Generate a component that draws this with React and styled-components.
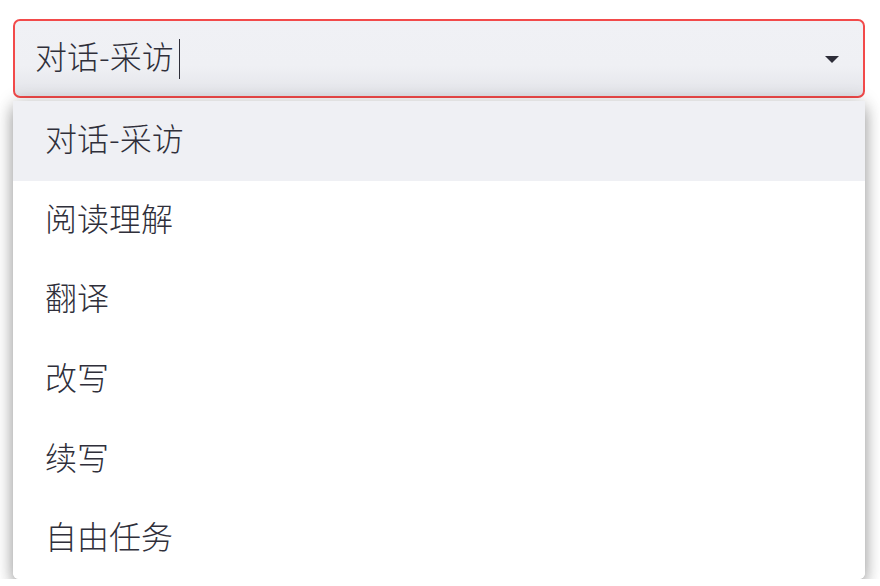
import styled, { createGlobalStyle } from 'styled-components';

const options = ['对话-采访', '阅读理解', '翻译', '改写', '续写', '自由任务'];

const GlobalStyle = createGlobalStyle`
  html, body {
    margin: 0;
    padding: 0;
    background: #ffffff;
    font-family: "Noto Sans CJK SC", "Noto Sans", sans-serif;
  }
`;

const Page = styled.div`
  padding: 19px 15px 0 13px;
`;

const Field = styled.div`
  height: 79px;
  box-sizing: border-box;
  border: 2px solid #f24a4a;
  border-radius: 7px;
  background: linear-gradient(to bottom, #f0f1f5 0%, #eff0f4 60%, #e3e4e9 100%);
  display: flex;
  align-items: center;
  padding: 0 24px 0 20px;
  color: #2f2f3a;
  font-size: 32px;
  font-weight: 300;
`;

const Value = styled.span`
  display: flex;
  align-items: center;
  line-height: 40px;
  margin-top: -8px;
`;

const Caret = styled.span`
  display: inline-block;
  width: 1px;
  height: 40px;
  background: #2f2f3a;
  margin-left: 5px;
  margin-top: 8px;
`;

const Arrow = styled.span`
  margin-left: auto;
  width: 0;
  height: 0;
  border-left: 7px solid transparent;
  border-right: 7px solid transparent;
  border-top: 7px solid #2d2d38;
  margin-top: 1px;
`;

const Menu = styled.ul`
  list-style: none;
  margin: 3px 0 0 0;
  padding: 0;
  background: #ffffff;
  border-radius: 0 0 6px 6px;
  box-shadow: 0 8px 16px rgba(0, 0, 0, 0.32), 0 0 18px rgba(0, 0, 0, 0.16);
  overflow: hidden;
`;

const Item = styled.li`
  height: 79.6px;
  box-sizing: border-box;
  display: flex;
  align-items: center;
  padding: 0 0 7px 32px;
  font-size: 32px;
  font-weight: 300;
  color: #2f2f3a;
  background: ${(p) => (p.$active ? '#eff0f4' : '#ffffff')};
`;

export default function App() {
  return (
    <>
      <GlobalStyle />
      <Page>
        <Field>
          <Value>
            对话-采访
            <Caret />
          </Value>
          <Arrow />
        </Field>
        <Menu>
          {options.map((o, i) => (
            <Item key={o} $active={i === 0}>
              {o}
            </Item>
          ))}
        </Menu>
      </Page>
    </>
  );
}
